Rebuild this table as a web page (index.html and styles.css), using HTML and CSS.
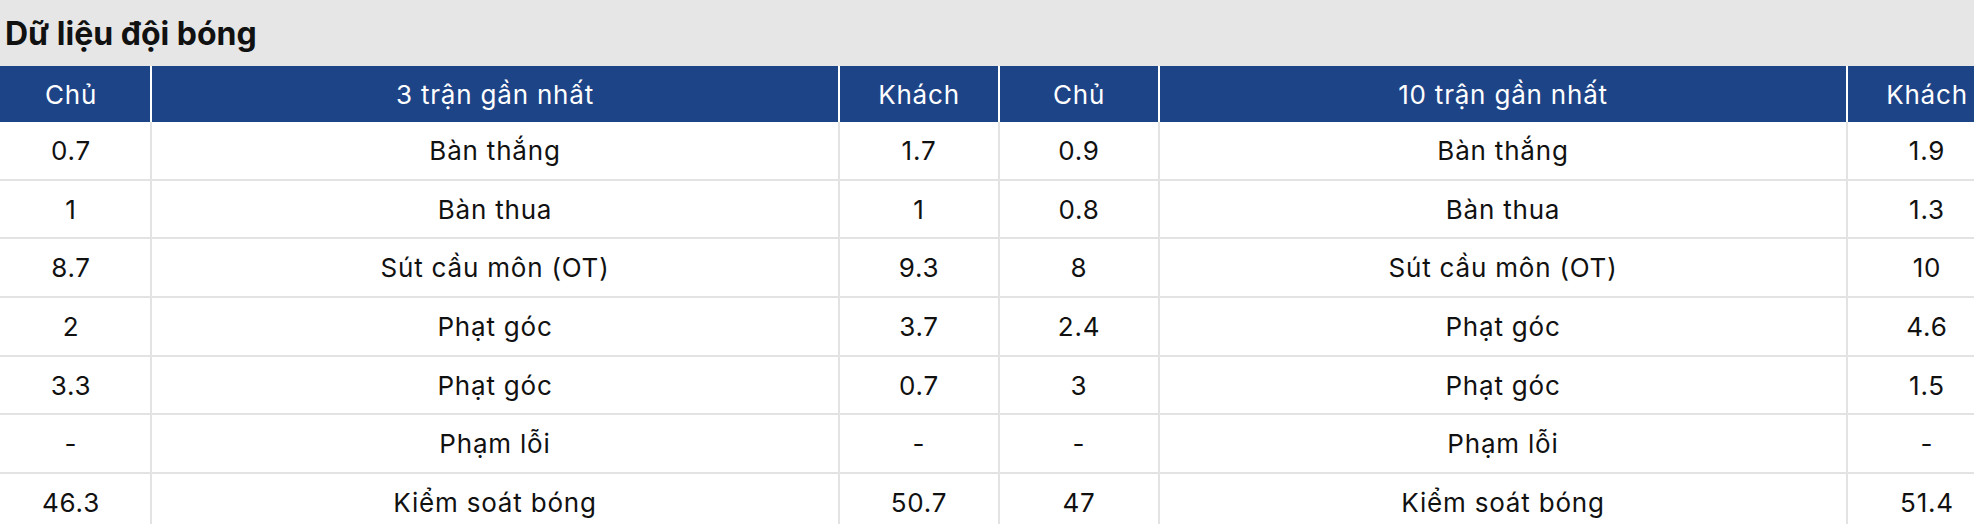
FILE: index.html
```html
<!DOCTYPE html>
<html lang="vi">
<head>
<meta charset="utf-8">
<title>Dữ liệu đội bóng</title>
<link rel="stylesheet" href="styles.css">
</head>
<body>
<div class="panel">
  <div class="panel-title">Dữ liệu đội bóng</div>
  <table class="stats">
    <colgroup>
      <col class="c-num"><col class="c-label"><col class="c-num"><col class="c-num"><col class="c-label"><col class="c-last">
    </colgroup>
    <thead>
      <tr><th>Chủ</th><th>3 trận gần nhất</th><th>Khách</th><th>Chủ</th><th>10 trận gần nhất</th><th>Khách</th></tr>
    </thead>
    <tbody>
      <tr><td>0.7</td><td>Bàn thắng</td><td>1.7</td><td>0.9</td><td>Bàn thắng</td><td>1.9</td></tr>
      <tr><td>1</td><td>Bàn thua</td><td>1</td><td>0.8</td><td>Bàn thua</td><td>1.3</td></tr>
      <tr><td>8.7</td><td>Sút cầu môn (OT)</td><td>9.3</td><td>8</td><td>Sút cầu môn (OT)</td><td>10</td></tr>
      <tr><td>2</td><td>Phạt góc</td><td>3.7</td><td>2.4</td><td>Phạt góc</td><td>4.6</td></tr>
      <tr><td>3.3</td><td>Phạt góc</td><td>0.7</td><td>3</td><td>Phạt góc</td><td>1.5</td></tr>
      <tr><td>-</td><td>Phạm lỗi</td><td>-</td><td>-</td><td>Phạm lỗi</td><td>-</td></tr>
      <tr><td>46.3</td><td>Kiểm soát bóng</td><td>50.7</td><td>47</td><td>Kiểm soát bóng</td><td>51.4</td></tr>
    </tbody>
  </table>
</div>
</body>
</html>
```
FILE: styles.css
```css
html, body {
  margin: 0;
  padding: 0;
  background: #ffffff;
  overflow: hidden;
}
body {
  font-family: Inter, "Noto Sans", "DejaVu Sans", sans-serif;
  color: #111111;
}
.panel {
  width: 1974px;
}
.panel-title {
  background: #e6e6e6;
  height: 66px;
  display: flex;
  align-items: center;
  padding-left: 5px;
  font-size: 32px;
  font-weight: 700;
  color: #111111;
}
.stats {
  margin-left: -8px;
  width: 2014px;
  table-layout: fixed;
  border-collapse: separate;
  border-spacing: 0;
  font-size: 26px;
  letter-spacing: 0.8px;
}
.c-num { width: 160px; }
.c-label { width: 688px; }
.c-last { width: 158px; }
.stats th,
.stats td {
  padding: 0;
  text-align: center;
  font-weight: 400;
  border-right: 2px solid #e3e3e3;
}
.stats th:last-child,
.stats td:last-child {
  border-right: none;
}
.stats th {
  background: #1e4488;
  color: #ffffff;
  height: 56px;
  border-right-color: #ffffff;
}
.stats td {
  height: 56.7px;
  border-bottom: 2px solid #e3e3e3;
}
```
